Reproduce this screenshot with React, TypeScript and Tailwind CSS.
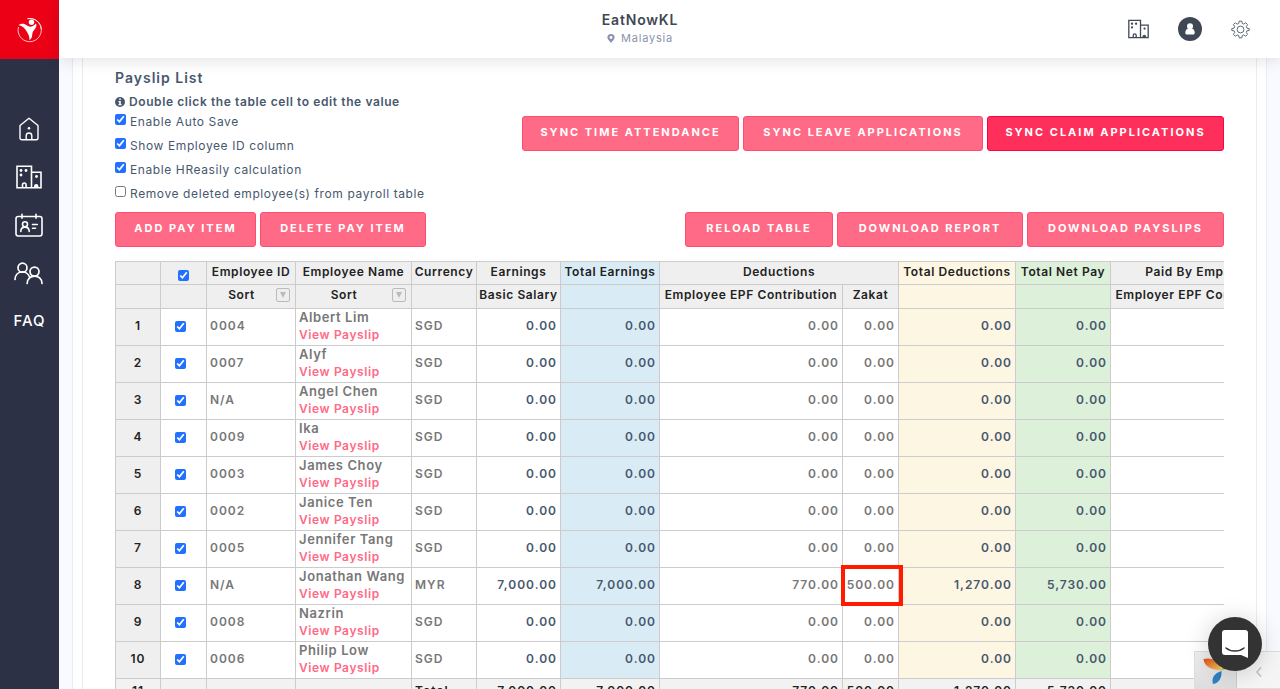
import React from "react";

interface Employee {
  id: string;
  name: string;
  currency: string;
  basic: string;
  totalEarnings: string;
  epf: string;
  zakat: string;
  totalDeductions: string;
  netPay: string;
  highlight?: boolean;
}

const zero = {
  currency: "SGD",
  basic: "0.00",
  totalEarnings: "0.00",
  epf: "0.00",
  zakat: "0.00",
  totalDeductions: "0.00",
  netPay: "0.00",
};

const employees: Employee[] = [
  { ...zero, id: "0004", name: "Albert Lim" },
  { ...zero, id: "0007", name: "Alyf" },
  { ...zero, id: "N/A", name: "Angel Chen" },
  { ...zero, id: "0009", name: "Ika" },
  { ...zero, id: "0003", name: "James Choy" },
  { ...zero, id: "0002", name: "Janice Ten" },
  { ...zero, id: "0005", name: "Jennifer Tang" },
  {
    id: "N/A",
    name: "Jonathan Wang",
    currency: "MYR",
    basic: "7,000.00",
    totalEarnings: "7,000.00",
    epf: "770.00",
    zakat: "500.00",
    totalDeductions: "1,270.00",
    netPay: "5,730.00",
    highlight: true,
  },
  { ...zero, id: "0008", name: "Nazrin" },
  { ...zero, id: "0006", name: "Philip Low" },
];

const options = [
  { id: "auto-save", label: "Enable Auto Save", checked: true },
  { id: "show-id", label: "Show Employee ID column", checked: true },
  { id: "calculation", label: "Enable HReasily calculation", checked: true },
  {
    id: "remove-deleted",
    label: "Remove deleted employee(s) from payroll table",
    checked: false,
  },
];

const Logo = () => (
  <svg viewBox="0 0 26 26" className="size-[26px]" fill="none">
    <path
      d="M1.500 10A11.600 11.600 0 1 0 10.500 1.700l4-.2A11.600 11.600 0 0 1 24.500 12.500"
      stroke="#fff"
      strokeWidth="1"
      opacity=".75"
    />
    <circle cx="14.500" cy="5.300" r="2.700" fill="#fff" />
    <path
      d="M1.500 8.200c3-2.200 6-1.700 8.500 .3 2.500 2 5.500 1.500 9-2 1.200 2-.3 5-2.300 7-1.700 1.800-1.200 4-1.700 6-.4 1.700-1.500 3-2.700 3.500.5-3-.8-5.500-2.300-8C8.500 12.500 6.500 8.700 1.500 8.200z"
      fill="#fff"
    />
  </svg>
);

const HomeIcon = () => (
  <svg
    viewBox="0 0 20 24"
    className="h-6 w-5"
    fill="none"
    stroke="currentColor"
    strokeWidth="1.400"
    strokeLinejoin="round"
  >
    <path d="M1 8.500 10 1.200l9 7.300V21a1.800 1.800 0 0 1-1.800 1.800H2.800A1.800 1.800 0 0 1 1 21z" />
    <path d="M7.200 22.800v-4a2.800 2.800 0 0 1 5.600 0v4" />
    <circle cx="10" cy="11.200" r="1.300" fill="currentColor" stroke="none" />
  </svg>
);

const BuildingIcon = ({ className }: { className: string }) => (
  <svg
    viewBox="0 0 26 24"
    className={className}
    fill="none"
    stroke="currentColor"
    strokeWidth="1.600"
  >
    <path d="M1 1.200h14.500v21.600H1zM15.500 7.200H25v15.600h-9.500" />
    <path d="M6.500 22.800v-3a1.800 1.800 0 0 1 3.600 0v3" />
    <g fill="currentColor" stroke="none">
      <circle cx="5" cy="5.500" r="1.400" />
      <circle cx="10" cy="5.500" r="1.400" />
      <circle cx="5" cy="10" r="1.400" />
      <circle cx="20.500" cy="11.500" r="1.400" />
      <path d="M18 22.800v-1.600a2.200 2.200 0 0 1 4.400 0v1.600z" />
    </g>
  </svg>
);

const CardIcon = () => (
  <svg
    viewBox="0 0 28 24"
    className="h-6 w-7"
    fill="none"
    stroke="currentColor"
    strokeWidth="1.600"
    strokeLinecap="round"
  >
    <rect x="1" y="3.500" width="26" height="19.500" rx="2.200" />
    <path d="M7 1.200v4M21 1.200v4M17.500 11.500h4.800M17.500 15.200h3" />
    <circle cx="10" cy="11.300" r="2.500" />
    <path d="M5.800 18.500c0-5.800 8.400-5.800 8.400 0" />
  </svg>
);

const PeopleIcon = () => (
  <svg
    viewBox="0 0 29 23"
    className="h-[23px] w-[29px]"
    fill="none"
    stroke="currentColor"
    strokeWidth="1.700"
    strokeLinecap="round"
  >
    <circle cx="8.500" cy="5.700" r="4.500" />
    <circle cx="20.500" cy="9.600" r="4.500" />
    <path d="M1 17.500c.2-9.500 12.600-9.800 14.600-2.200M13.200 21.500c.2-9.800 14.600-9.800 14.800 0" />
  </svg>
);

const GearIcon = () => (
  <svg
    viewBox="0 0 24 24"
    className="size-[19px]"
    fill="none"
    stroke="currentColor"
    strokeWidth="1.200"
    strokeLinejoin="round"
  >
    <circle cx="12" cy="12" r="4.300" />
    <path d="M10.300 1.500h3.400l.5 2.900 2 .8 2.400-1.700 2.400 2.400-1.700 2.400.8 2 2.900.5v2.400l-2.900.5-.8 2 1.700 2.400-2.400 2.400-2.400-1.700-2 .8-.5 2.900h-3.400l-.5-2.900-2-.8-2.400 1.700L3 18.100l1.700-2.400-.8-2-2.900-.5v-2.400l2.900-.5.8-2L3 5.900l2.400-2.400 2.400 1.700 2-.8z" />
  </svg>
);

const ActionButton = ({
  children,
  active,
  width,
}: {
  children: React.ReactNode;
  active?: boolean;
  width: string;
}) => (
  <button
    type="button"
    className={`h-[35px] rounded-[3px] border pb-0.5 text-center text-[11px] font-bold whitespace-nowrap uppercase tracking-[2px] text-white ${width} ${
      active
        ? "border-[#ff0040] bg-[#ff2f5b]"
        : "border-[#ff4d70] bg-[#ff6a86]"
    }`}
  >
    {children}
  </button>
);

const Sidebar = () => (
  <aside className="flex w-[59px] shrink-0 flex-col bg-[#2c3146] text-white">
    <a
      href="#home"
      aria-label="HReasily"
      className="flex h-[59px] items-center justify-center bg-[#ec0016]"
    >
      <Logo />
    </a>
    <nav className="flex flex-col items-center pt-[46px] pr-0.5">
      <a href="#dashboard" aria-label="Dashboard" className="flex h-12 items-center">
        <HomeIcon />
      </a>
      <a href="#company" aria-label="Company" className="flex h-12 items-center">
        <BuildingIcon className="h-6 w-[26px]" />
      </a>
      <a href="#payroll" aria-label="Payroll" className="flex h-12 items-center">
        <CardIcon />
      </a>
      <a href="#employees" aria-label="Employees" className="flex h-12 items-center">
        <PeopleIcon />
      </a>
      <a
        href="#faq"
        className="flex h-12 items-center pl-0.5 text-[15px] font-medium tracking-[1px]"
      >
        FAQ
      </a>
    </nav>
  </aside>
);

const Header = () => (
  <header className="relative z-10 grid h-[58px] shrink-0 grid-cols-[1fr_auto_1fr] items-center bg-white shadow-[0_2px_16px_rgba(0,0,0,0.12)]">
    <div className="col-start-2 -ml-[59px] pb-0.5 text-center tracking-wider">
      <h1 className="text-sm leading-5 font-semibold text-[#3f4854]">
        EatNowKL
      </h1>
      <p className="flex items-center justify-center gap-1.5 text-[11px] leading-4 text-[#8a93ad]">
        <svg viewBox="0 0 8 10" className="h-[9px] w-2" fill="currentColor">
          <path
            fillRule="evenodd"
            d="M4 0a4 4 0 0 1 4 4c0 2-2 3.500-4 6C2 7.500 0 6 0 4a4 4 0 0 1 4-4zm0 2.300a1.600 1.600 0 1 0 0 3.200 1.600 1.600 0 0 0 0-3.200z"
          />
        </svg>
        Malaysia
      </p>
    </div>
    <div className="flex items-center justify-end gap-[29px] pr-[30px] text-[#3f4854]">
      <button type="button" aria-label="Companies">
        <BuildingIcon className="h-5 w-[21px]" />
      </button>
      <button
        type="button"
        aria-label="Account"
        className="flex size-6 items-center justify-center rounded-full bg-[#3f4854] text-white"
      >
        <svg viewBox="0 0 12 14" className="h-3.5 w-3" fill="currentColor">
          <circle cx="6" cy="4.200" r="3" />
          <path d="M3.300 6.800h5.400c1.300.8 2 2.200 2 4.200 0 .9-.6 1.500-1.500 1.500H2.800c-.9 0-1.500-.6-1.500-1.500 0-2 .7-3.400 2-4.200z" />
        </svg>
      </button>
      <button type="button" aria-label="Settings" className="text-[#59616c]">
        <GearIcon />
      </button>
    </div>
  </header>
);

const SortCell = () => (
  <div className="flex items-center pr-[5px]">
    <span className="flex-1 text-center">Sort</span>
    <button
      type="button"
      aria-label="Sort"
      className="flex size-3.5 items-center justify-center rounded-[2px] border border-[#bbb] bg-[#eee] text-[#bbb]"
    >
      <svg viewBox="0 0 8 8" className="size-2" fill="currentColor">
        <path d="M1 1h6L4 7z" />
      </svg>
    </button>
  </div>
);

const PayslipTable = () => (
  <div className="overflow-hidden">
    <table className="w-[1176px] table-fixed border-collapse text-xs font-semibold tracking-[1px] text-[#777] [&_td]:border [&_td]:border-[#ccc] [&_th]:border [&_th]:border-[#ccc]">
      <colgroup>
        <col className="w-[45px]" />
        <col className="w-[46px]" />
        <col className="w-[89px]" />
        <col className="w-[116px]" />
        <col className="w-[65px]" />
        <col className="w-[84px]" />
        <col className="w-[99px]" />
        <col className="w-[183px]" />
        <col className="w-[56px]" />
        <col className="w-[117px]" />
        <col className="w-[95px]" />
        <col className="w-[180px]" />
      </colgroup>
      <thead className="bg-[#efefef] leading-4 tracking-wider whitespace-nowrap text-[#222] [&_th]:p-0 [&_th]:font-semibold">
        <tr className="h-[23px] [&_th]:pb-0.5">
          <th></th>
          <th>
            <input
              type="checkbox"
              aria-label="Select all"
              defaultChecked
              className="mx-auto mt-1.5 block size-[11px] accent-[#2270ff]"
            />
          </th>
          <th>Employee ID</th>
          <th>Employee Name</th>
          <th>Currency</th>
          <th>Earnings</th>
          <th className="bg-[#d9ecf6]">Total Earnings</th>
          <th colSpan={2}>Deductions</th>
          <th className="bg-[#fdf6e2]">Total Deductions</th>
          <th className="bg-[#ddf0d9]">Total Net Pay</th>
          <th>Paid By Employer</th>
        </tr>
        <tr className="h-6 [&_th]:pb-1">
          <th></th>
          <th></th>
          <th>
            <SortCell />
          </th>
          <th>
            <SortCell />
          </th>
          <th></th>
          <th>Basic Salary</th>
          <th className="bg-[#d9ecf6]"></th>
          <th>Employee EPF Contribution</th>
          <th>Zakat</th>
          <th className="bg-[#fdf6e2]"></th>
          <th className="bg-[#ddf0d9]"></th>
          <th>Employer EPF Contribution</th>
        </tr>
      </thead>
      <tbody className="[&_td]:px-[3px] [&_td]:pt-0 [&_td]:pb-0.5">
        {employees.map((employee, index) => (
          <tr key={employee.name} className="h-[37px]">
            <th className="bg-[#efefef] p-0 pb-0.5 font-semibold text-[#222]">
              {index + 1}
            </th>
            <td>
              <div className="flex justify-center pr-1.5">
                <input
                  type="checkbox"
                  aria-label={`Select ${employee.name}`}
                  defaultChecked
                  className="mt-px size-[11px] accent-[#2270ff]"
                />
              </div>
            </td>
            <td>{employee.id}</td>
            <td className="leading-[17px] tracking-wider whitespace-nowrap">
              <div className="text-[13px]">{employee.name}</div>
              <a href="#payslip" className="block text-[#ff6a86]">
                View Payslip
              </a>
            </td>
            <td>{employee.currency}</td>
            <td className="text-right text-[#47586e]">{employee.basic}</td>
            <td className="bg-[#d9ecf6] text-right text-[#47586e]">
              {employee.totalEarnings}
            </td>
            <td className="text-right">{employee.epf}</td>
            <td className="relative text-right">
              {employee.zakat}
              {employee.highlight && (
                <span className="pointer-events-none absolute -top-[3px] -right-[5px] -bottom-[2px] -left-[2px] z-10 border-4 border-[#ff1a00]" />
              )}
            </td>
            <td className="bg-[#fdf6e2] text-right text-[#47586e]">
              {employee.totalDeductions}
            </td>
            <td className="bg-[#ddf0d9] text-right text-[#47586e]">
              {employee.netPay}
            </td>
            <td></td>
          </tr>
        ))}
        <tr className="h-[26px] bg-[#f2f2f2] text-[#222]">
          <th className="p-0 pb-0.5 font-semibold">11</th>
          <td></td>
          <td></td>
          <td></td>
          <td>Total</td>
          <td className="text-right">7,000.00</td>
          <td className="text-right">7,000.00</td>
          <td className="text-right">770.00</td>
          <td className="text-right">500.00</td>
          <td className="text-right">1,270.00</td>
          <td className="text-right">5,730.00</td>
          <td></td>
        </tr>
      </tbody>
    </table>
  </div>
);

const SupportWidgets = () => (
  <div className="fixed right-0 bottom-0 z-20">
    <div className="flex h-[38px] w-[86px] border border-r-0 border-[#ddd] bg-[#f5f5f5]">
      <div className="flex w-[42px] items-end justify-center border-r border-[#ccc] bg-linear-to-b from-[#eee] to-[#ddd] pb-1">
        <svg viewBox="0 0 26 28" className="h-7 w-[26px]">
          <defs>
            <linearGradient id="petal" x1="0" y1="0" x2="1" y2="1">
              <stop offset="0" stopColor="#e2491d" />
              <stop offset="1" stopColor="#f8d060" />
            </linearGradient>
          </defs>
          <path
            d="M.5 3C8 1 17 4 18.500 14.500 9 14 1 11 .5 3z"
            fill="url(#petal)"
          />
          <path d="M18.500 14.500c0-5 2-8 6.500-10 1.500 5-1 9-6.500 10z" fill="#a5cc50" />
          <path d="M18.500 15c.5 6-2 12-8.500 13-2-6 1.500-11 8.500-13z" fill="#2f7fc4" />
        </svg>
      </div>
      <button
        type="button"
        aria-label="Expand"
        className="flex flex-1 items-center justify-center text-[#bbb]"
      >
        <svg
          viewBox="0 0 6 10"
          className="mt-1 h-2.5 w-1.5"
          fill="none"
          stroke="currentColor"
          strokeWidth="1.300"
        >
          <path d="M5 .5.8 5 5 9.500" />
        </svg>
      </button>
    </div>
    <button
      type="button"
      aria-label="Open chat"
      className="absolute right-[18px] bottom-[18px] flex size-[54px] items-center justify-center rounded-full bg-[#333] shadow-[0_2px_24px_rgba(0,0,0,0.18)]"
    >
      <svg viewBox="0 0 26 28" className="h-7 w-[26px]">
        <path
          d="M3 0h20a3 3 0 0 1 3 3v25l-7-3H3a3 3 0 0 1-3-3V3a3 3 0 0 1 3-3z"
          fill="#fff"
        />
        <path
          d="M4 18c5 4 13 4 18 0"
          fill="none"
          stroke="#333"
          strokeWidth="1.500"
          strokeLinecap="round"
        />
      </svg>
    </button>
  </div>
);

const App: React.FC = () => {
  return (
    <div className="flex h-screen overflow-hidden bg-[#f9faff] font-[Inter,sans-serif] text-[#47586e]">
      <Sidebar />
      <div className="flex min-w-0 flex-1 flex-col">
        <Header />
        <main className="min-h-0 flex-1 overflow-hidden px-[13px]">
          <div className="h-full border-x border-[#e9ecf5] bg-white px-[9px]">
            <section className="h-full border-x border-[#e9ecf5] px-8 pt-2">
              <h2 className="text-sm leading-6 font-semibold tracking-[1px]">
                Payslip List
              </h2>
              <p className="mt-1 flex items-center gap-1 text-xs leading-4 font-semibold tracking-wider">
                <svg viewBox="0 0 10 10" className="size-2.5">
                  <circle cx="5" cy="5" r="5" fill="currentColor" />
                  <path
                    d="M4.200 1.500h1.600V3H4.200zM3.500 4h2.300v3h.7v1.200h-3V7h.7V5.200h-.7z"
                    fill="#fff"
                  />
                </svg>
                Double click the table cell to edit the value
              </p>

              {/* OPTIONS */}
              <div className="flex items-start justify-between">
                <div>
                  {options.map((option) => (
                    <div key={option.id} className="flex h-6 gap-1">
                      <input
                        type="checkbox"
                        id={option.id}
                        defaultChecked={option.checked}
                        className="mt-1 size-[11px] accent-[#2270ff]"
                      />
                      <label
                        htmlFor={option.id}
                        className="text-xs leading-6 tracking-wider"
                      >
                        {option.label}
                      </label>
                    </div>
                  ))}
                </div>
                <div className="flex gap-1 pt-1.5">
                  <ActionButton width="w-[217px]">
                    Sync Time Attendance
                  </ActionButton>
                  <ActionButton width="w-[240px]">
                    Sync Leave Applications
                  </ActionButton>
                  <ActionButton width="w-[237px]" active>
                    Sync Claim Applications
                  </ActionButton>
                </div>
              </div>

              {/* TABLE ACTIONS */}
              <div className="mt-1.5 mb-3.5 flex justify-between">
                <div className="flex gap-1">
                  <ActionButton width="w-[141px]">Add Pay Item</ActionButton>
                  <ActionButton width="w-[166px]">Delete Pay Item</ActionButton>
                </div>
                <div className="flex gap-1">
                  <ActionButton width="w-[148px]">Reload Table</ActionButton>
                  <ActionButton width="w-[186px]">Download Report</ActionButton>
                  <ActionButton width="w-[197px]">
                    Download Payslips
                  </ActionButton>
                </div>
              </div>

              <PayslipTable />
            </section>
          </div>
        </main>
      </div>
      <SupportWidgets />
    </div>
  );
};

export default App;
